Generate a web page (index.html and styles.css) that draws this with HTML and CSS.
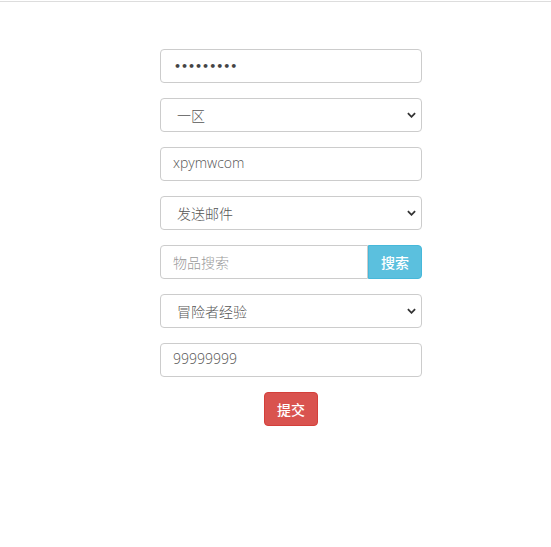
FILE: index.html
```html
<!DOCTYPE html>
<html lang="zh">
<head>
<meta charset="utf-8">
<title>表单</title>
<link rel="stylesheet" href="styles.css">
</head>
<body>
<div class="topline"></div>
<form class="panel">
  <input class="field pw" type="password" value="123456789">
  <select class="field sel"><option>一区</option></select>
  <input class="field txt" type="text" value="xpymwcom">
  <select class="field sel"><option>发送邮件</option></select>
  <div class="group">
    <input class="field grow" type="text" placeholder="物品搜索">
    <button type="button" class="btn info">搜索</button>
  </div>
  <select class="field sel"><option>冒险者经验</option></select>
  <input class="field txt" type="text" value="99999999">
  <div class="actions"><button type="button" class="btn danger">提交</button></div>
</form>
</body>
</html>
```
FILE: styles.css
```css
html, body { margin: 0; padding: 0; background: #fff; }
body { font-family: "Open Sans", "Noto Sans CJK SC", sans-serif; font-size: 14px; color: #555; }
.topline { height: 1px; margin-top: 1px; background: #ddd; }
.panel { width: 262px; margin: 47px 0 0 160px; display: flex; flex-direction: column; gap: 15px; }
.field {
  box-sizing: border-box; height: 34px; width: 100%; margin: 0;
  padding: 6px 12px; border: 1px solid #ccc; border-radius: 4px;
  font-family: "Open Sans", "Noto Sans CJK SC", sans-serif; font-size: 14px; font-weight: 300; color: #555;
  background: #fff; outline: none;
}
.txt { padding: 4px 12px 8px; }
.pw { font-family: "DejaVu Sans", sans-serif; font-size: 11px; font-weight: 700; color: #444; padding-left: 13px; }
.field::placeholder { color: #999; }
.sel {
  appearance: none; -webkit-appearance: none; padding-left: 16px;
  font-family: "Noto Sans CJK SC", sans-serif; font-weight: 300; color: #555;
  background-image: url("data:image/svg+xml,%3Csvg xmlns='http://www.w3.org/2000/svg' width='10' height='6' viewBox='0 0 10 6'%3E%3Cpath d='M1 1l4 4 4-4' fill='none' stroke='%23333' stroke-width='2'/%3E%3C/svg%3E");
  background-repeat: no-repeat; background-position: right 5px center; background-size: 9px 6px;
}
.group { display: flex; }
.grow { flex: 1; border-radius: 4px 0 0 4px; font-family: "Noto Sans CJK SC", sans-serif; font-weight: 300; }
.btn {
  box-sizing: border-box; height: 34px; padding: 6px 12px; border: 1px solid transparent;
  border-radius: 4px; color: #fff; font-family: "Noto Sans CJK SC", sans-serif; font-size: 14px; font-weight: 500; cursor: pointer;
}
.info { background: #5bc0de; border-color: #46b8da; border-radius: 0 4px 4px 0; width: 54px; padding: 0; }
.actions { display: flex; justify-content: center; }
.danger { background: #d9534f; border-color: #d43f3a; width: 54px; padding: 0; }
```
